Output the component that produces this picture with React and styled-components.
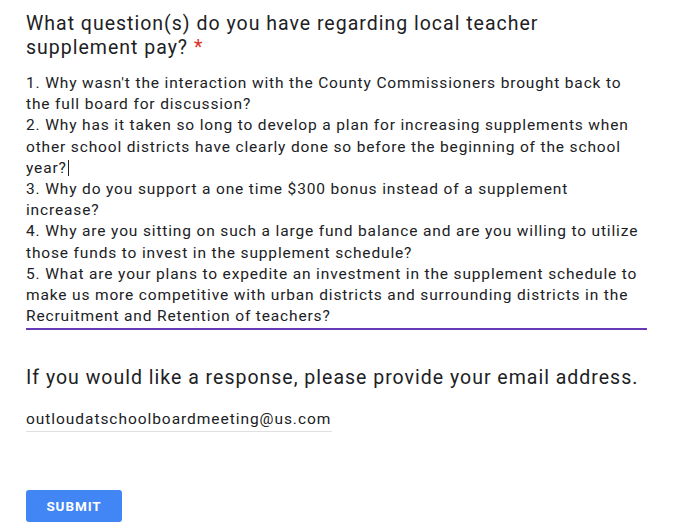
import styled, { createGlobalStyle } from "styled-components";

const GlobalStyle = createGlobalStyle`
  body {
    margin: 0;
    background: #ffffff;
    font-family: Roboto, "Liberation Sans", Arial, sans-serif;
    color: #202124;
  }
`;

const answerLines = [
  "1. Why wasn't the interaction with the County Commissioners brought back to",
  "the full board for discussion?",
  "2. Why has it taken so long to develop a plan for increasing supplements when",
  "other school districts have clearly done so before the beginning of the school",
  "year?",
  "3. Why do you support a one time $300 bonus instead of a supplement",
  "increase?",
  "4. Why are you sitting on such a large fund balance and are you willing to utilize",
  "those funds to invest in the supplement schedule?",
  "5. What are your plans to expedite an investment in the supplement schedule to",
  "make us more competitive with urban districts and surrounding districts in the",
  "Recruitment and Retention of teachers?",
];

const App = () => {
  return (
    <Page>
      <GlobalStyle />
      <Question>
        <Title>
          What question(s) do you have regarding local teacher
          <br />
          supplement pay? <Required>*</Required>
        </Title>
        <Answer>
          {answerLines.map((line, i) => (
            <Line key={i}>
              {line}
              {i === 4 && <Caret />}
            </Line>
          ))}
        </Answer>
      </Question>
      <Question>
        <Title>If you would like a response, please provide your email address.</Title>
        <Email>outloudatschoolboardmeeting@us.com</Email>
      </Question>
      <SubmitButton>SUBMIT</SubmitButton>
    </Page>
  );
};

export default App;

const Page = styled.div`
  width: 675px;
  height: 532px;
  padding: 12px 0 0 26px;
  box-sizing: border-box;
  display: flex;
  flex-direction: column;
`;

const Question = styled.div`
  display: flex;
  flex-direction: column;
  margin-bottom: 36px;
`;

const Title = styled.div`
  font-size: 19.5px;
  line-height: 24px;
  letter-spacing: 1px;
  color: #202124;
`;

const Required = styled.span`
  color: #d93025;
`;

const Answer = styled.div`
  margin-top: 13px;
  width: 621px;
  border-bottom: 2px solid #673ab7;
  padding-bottom: 1px;
`;

const Line = styled.div`
  font-size: 15.5px;
  line-height: 21.2px;
  letter-spacing: 0.85px;
  white-space: nowrap;
  color: #202124;
`;

const Caret = styled.span`
  display: inline-block;
  width: 1px;
  height: 16px;
  background: #202124;
  vertical-align: -3px;
  margin-left: 1px;
`;

const Email = styled.div`
  margin-top: 18px;
  width: 306px;
  font-size: 15.5px;
  line-height: 22px;
  letter-spacing: 0.95px;
  padding-bottom: 1px;
  border-bottom: 1px solid #e0e0e0;
  white-space: nowrap;
`;

const SubmitButton = styled.button`
  margin-top: 22px;
  width: 96px;
  height: 32px;
  border: none;
  border-radius: 3px;
  background: #4285f4;
  color: #ffffff;
  font-family: Roboto, "Liberation Sans", Arial, sans-serif;
  font-weight: 700;
  font-size: 13.5px;
  letter-spacing: 0.9px;
  padding: 0;
`;
